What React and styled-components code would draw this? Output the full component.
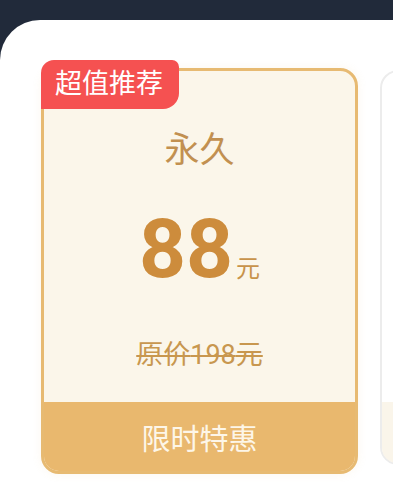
import React from "react";
import styled, { createGlobalStyle } from "styled-components";

const GlobalStyle = createGlobalStyle`
  html, body {
    margin: 0;
    padding: 0;
    background: #212a3a;
    font-family: Roboto, "Noto Sans CJK SC", sans-serif;
  }
  #root {
    height: 502px;
    overflow: hidden;
  }
`;

const plans = [
  { id: 1, name: "永久", price: 88, original: 198, tag: "超值推荐", footer: "限时特惠", active: true },
  { id: 2, name: "一年", price: 38, original: 98, footer: "限时特惠", active: false },
];

const App = () => {
  return (
    <>
      <GlobalStyle />
      <Sheet>
        <CardRow>
          {plans.map((plan) => (
            <Card active={plan.active} key={plan.id}>
              {plan.tag && <Badge>{plan.tag}</Badge>}
              <Body>
                <PlanName>{plan.name}</PlanName>
                <PriceRow>
                  <Price>{plan.price}</Price>
                  <Unit>元</Unit>
                </PriceRow>
                <Original>原价{plan.original}元</Original>
              </Body>
              <Footer active={plan.active}>{plan.footer}</Footer>
            </Card>
          ))}
        </CardRow>
      </Sheet>
    </>
  );
};

export default App;

const Sheet = styled.div`
  margin-top: 20px;
  height: 482px;
  background-color: #ffffff;
  border-radius: 40px 0 0 0;
  overflow: hidden;
`;

const CardRow = styled.div`
  display: flex;
  align-items: flex-start;
  gap: 22px;
  padding: 48px 0 0 41px;
`;

const Card = styled.div`
  position: relative;
  flex: 0 0 auto;
  box-sizing: border-box;
  display: flex;
  flex-direction: column;
  width: ${(props) => (props.active ? "317px" : "310px")};
  height: ${(props) => (props.active ? "406px" : "395px")};
  margin-top: ${(props) => (props.active ? "0" : "2px")};
  border: ${(props) => (props.active ? "3px solid #e7ba72" : "2px solid #ececec")};
  border-radius: 18px;
  background-color: ${(props) => (props.active ? "#fbf6ea" : "#ffffff")};
  box-shadow: ${(props) =>
    props.active ? "0 0 10px rgba(231, 186, 114, 0.12)" : "none"};
`;

const Badge = styled.div`
  position: absolute;
  top: -11px;
  left: -3px;
  height: 49px;
  padding: 0 16px 0 14px;
  display: flex;
  align-items: center;
  background-color: #f55151;
  color: #ffffff;
  font-size: 27px;
  line-height: 1;
  border-radius: 13px 7px 16px 0;
`;

const Body = styled.div`
  flex: 1;
  display: flex;
  flex-direction: column;
  align-items: center;
  padding-top: 62px;
`;

const PlanName = styled.div`
  font-size: 35px;
  line-height: 35px;
  color: #c29050;
`;

const PriceRow = styled.div`
  display: flex;
  align-items: baseline;
  margin-top: 40px;
`;

const Price = styled.span`
  font-size: 82px;
  line-height: 82px;
  font-weight: 700;
  color: #cd8c3c;
`;

const Unit = styled.span`
  margin-left: 3px;
  font-size: 24px;
  color: #c8934a;
`;

const Original = styled.div`
  margin-top: 52px;
  font-size: 27px;
  line-height: 27px;
  color: #c8974f;
  text-decoration: line-through;
  text-decoration-thickness: 2px;
`;

const Footer = styled.div`
  flex: 0 0 auto;
  height: ${(props) => (props.active ? "69px" : "61px")};
  display: flex;
  align-items: center;
  justify-content: center;
  background-color: ${(props) => (props.active ? "#e9b86e" : "#faf5ea")};
  color: #fdf6e8;
  font-size: 29px;
  border-radius: 0 0 15px 15px;
`;
